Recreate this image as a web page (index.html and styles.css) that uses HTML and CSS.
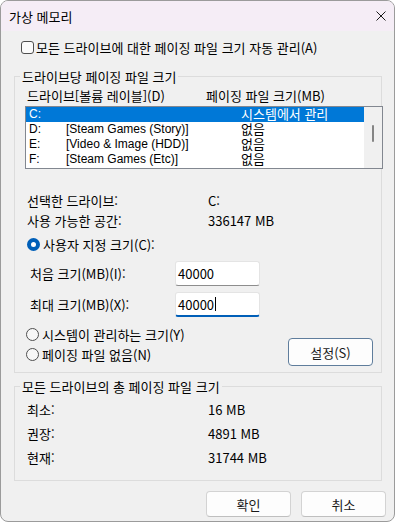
FILE: index.html
```html
<!DOCTYPE html>
<html lang="ko">
<head>
<meta charset="utf-8">
<title>가상 메모리</title>
<link rel="stylesheet" href="styles.css">
</head>
<body>
<div class="window">
  <div class="titlebar">
    <span class="title">가상 메모리</span>
    <svg class="close" width="10" height="10" viewBox="0 0 10 10"><path d="M0.5 0.5 L9.5 9.5 M9.5 0.5 L0.5 9.5" stroke="#1a1a1a" stroke-width="1" fill="none"/></svg>
  </div>
  <div class="content">
    <div class="check-row"><span class="checkbox"></span><span>모든 드라이브에 대한 페이징 파일 크기 자동 관리(A)</span></div>

    <fieldset class="group group-drives">
      <legend>드라이브당 페이징 파일 크기</legend>
      <div class="group-body">
        <div class="list-head"><span class="col-drive">드라이브[볼륨 레이블](D)</span><span>페이징 파일 크기(MB)</span></div>
        <div class="listbox">
          <div class="rows">
            <div class="row selected"><span class="c-letter">C:</span><span class="c-label"></span><span>시스템에서 관리</span></div>
            <div class="row"><span class="c-letter">D:</span><span class="c-label">[Steam Games (Story)]</span><span>없음</span></div>
            <div class="row"><span class="c-letter">E:</span><span class="c-label">[Video &amp; Image (HDD)]</span><span>없음</span></div>
            <div class="row"><span class="c-letter">F:</span><span class="c-label">[Steam Games (Etc)]</span><span>없음</span></div>
          </div>
          <div class="scrollbar"><span class="thumb"></span></div>
        </div>
        <div class="info">
          <span>선택한 드라이브:</span><span>C:</span>
          <span>사용 가능한 공간:</span><span>336147 MB</span>
        </div>
        <div class="radio-row custom"><span class="radio on"></span><span>사용자 지정 크기(C):</span></div>
        <div class="size-grid">
          <span>처음 크기(MB)(I):</span><div class="input">40000</div>
          <span>최대 크기(MB)(X):</span><div class="input focus">40000<span class="caret"></span></div>
        </div>
        <div class="lower">
          <div class="radio-col">
            <div class="radio-row"><span class="radio"></span><span>시스템이 관리하는 크기(Y)</span></div>
            <div class="radio-row"><span class="radio"></span><span>페이징 파일 없음(N)</span></div>
          </div>
          <button class="btn btn-set">설정(S)</button>
        </div>
      </div>
    </fieldset>

    <fieldset class="group group-total">
      <legend>모든 드라이브의 총 페이징 파일 크기</legend>
      <div class="totals">
        <span>최소:</span><span>16 MB</span>
        <span>권장:</span><span>4891 MB</span>
        <span>현재:</span><span>31744 MB</span>
      </div>
    </fieldset>

    <div class="actions">
      <button class="btn">확인</button>
      <button class="btn">취소</button>
    </div>
  </div>
</div>
</body>
</html>
```
FILE: styles.css
```css
body {
  margin: 0;
  background: #ffffff;
  font-family: "Noto Sans CJK KR", "Noto Sans", sans-serif;
  font-size: 13px;
  line-height: 15px;
  color: #000000;
}

.window {
  box-sizing: border-box;
  width: 395px;
  height: 522px;
  border: 1px solid #9b9b9b;
  border-radius: 8px;
  background: #f0f0f0;
  overflow: hidden;
}

.titlebar {
  height: 30px;
  background: #f5edf6;
  display: flex;
  align-items: center;
  justify-content: space-between;
  padding: 0 8px 0 8px;
}

.close {
  display: block;
}

.content {
  padding: 0 0 0 13px;
}

.check-row {
  display: flex;
  align-items: center;
  height: 15px;
  margin: 9px 0 0 7px;
}

.checkbox {
  box-sizing: border-box;
  width: 13px;
  height: 13px;
  border: 1px solid #4f4f4f;
  border-radius: 3px;
  background: #fbfbfb;
  margin-right: 2px;
}

.group {
  box-sizing: border-box;
  width: 368px;
  min-width: 0;
  margin: 14px 0 0 0;
  padding: 0;
  border: 1px solid #dcdcdc;
}

.group legend {
  padding: 0 2px;
  margin-left: 5px;
  line-height: 15px;
}

.group-body {
  padding: 0 0 6px 11px;
}

.list-head {
  display: flex;
  margin-top: 4px;
  padding-left: 1px;
}

.col-drive {
  width: 179px;
}

.listbox {
  box-sizing: border-box;
  width: 358px;
  height: 63px;
  margin: 3px 0 0 -1px;
  border: 1px solid #828790;
  background: #ffffff;
  display: flex;
}

.rows {
  width: 338px;
}

.row {
  display: flex;
  height: 15px;
  line-height: 15px;
  padding-left: 3px;
  font-family: "Liberation Sans", "Noto Sans CJK KR", sans-serif;
}

.row.selected {
  background: #0078d7;
  color: #ffffff;
}

.c-letter {
  width: 37px;
  font-size: 12px;
}

.c-label {
  width: 175px;
  font-size: 12px;
}

.scrollbar {
  width: 18px;
  background: #f0f0f0;
}

.thumb {
  display: block;
  width: 2px;
  height: 17px;
  margin: 18px 0 0 8px;
  background: #858585;
  border-radius: 1px;
}

.info {
  display: grid;
  grid-template-columns: 181px auto;
  line-height: 20px;
  margin-top: 22px;
  padding-left: 1px;
}

.radio-row {
  display: flex;
  align-items: center;
  height: 20px;
}

.radio-row.custom {
  height: 15px;
  margin: 6px 0 0 1px;
}

.radio {
  box-sizing: border-box;
  width: 13px;
  height: 13px;
  border: 1px solid #4f4f4f;
  border-radius: 50%;
  background: #f7f7f7;
  margin-right: 3px;
}

.radio.on {
  border: 4px solid #005fb8;
  background: #ffffff;
}

.size-grid {
  display: grid;
  grid-template-columns: 145px 85px;
  row-gap: 6px;
  align-items: center;
  margin-top: 9px;
  padding-left: 4px;
}

.input {
  box-sizing: border-box;
  width: 85px;
  height: 25px;
  background: #ffffff;
  border: 1px solid #e4e4e4;
  border-bottom-color: #8d8d8d;
  border-radius: 3px;
  padding: 0 0 0 2px;
  display: flex;
  align-items: center;
}

.input.focus {
  border-bottom: 2px solid #005fb8;
}

.caret {
  width: 1px;
  height: 14px;
  background: #000000;
  margin-left: 1px;
}

.lower {
  display: flex;
  justify-content: space-between;
  align-items: flex-start;
  margin-top: 7px;
}

.btn {
  box-sizing: border-box;
  width: 85px;
  height: 26px;
  font-family: inherit;
  font-size: 13px;
  line-height: 15px;
  color: #1a1a1a;
  background: #fdfdfd;
  border: 1px solid #d3d3d3;
  border-bottom-color: #bfbfbf;
  border-radius: 4px;
  padding: 0;
}

.btn-set {
  height: 28px;
  margin: 14px 8px 0 0;
  border: 1px solid #5f7d9c;
}

.totals {
  display: grid;
  grid-template-columns: 181px auto;
  line-height: 24px;
  padding: 4px 0 10px 12px;
}

.group-total {
  margin-top: 6px;
}

.actions {
  display: flex;
  justify-content: flex-end;
  gap: 10px;
  margin-top: 10px;
  padding-right: 8px;
}
```
